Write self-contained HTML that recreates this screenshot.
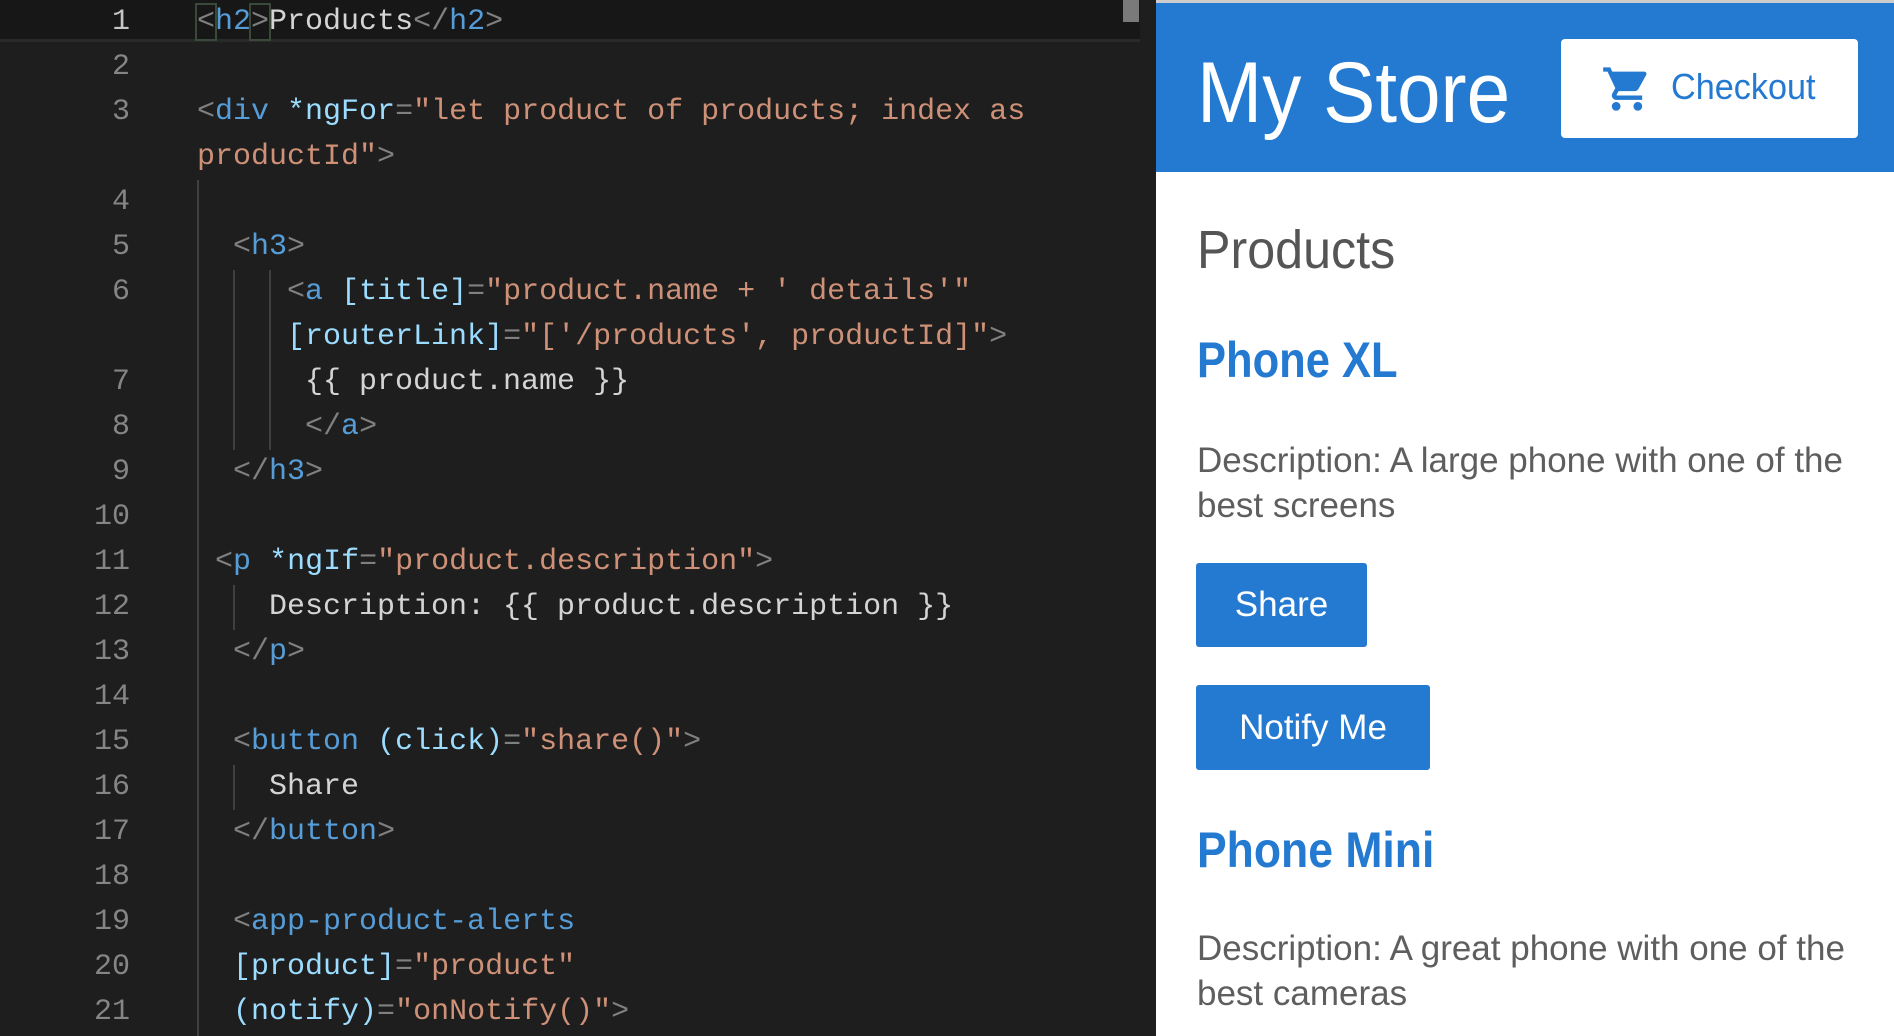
<!DOCTYPE html>
<html><head><meta charset="utf-8"><style>
*{margin:0;padding:0;box-sizing:border-box}
html,body{width:1894px;height:1036px;overflow:hidden;background:#1e1e1e}
#ed{position:absolute;left:0;top:0;width:1156px;height:1036px;background:#1e1e1e;font-family:"Liberation Mono",monospace;font-size:30px}
.hl{position:absolute;left:0;top:0;width:1140px;height:42px;background:#171717;border-bottom:3px solid #2a2a2a}
.ln{position:absolute;left:0;width:130px;text-align:right;color:#858585;line-height:45px;height:45px}
.cd{position:absolute;left:197px;line-height:45px;height:45px;white-space:pre;color:#d4d4d4}
.g{color:#808080}.t{color:#569cd6}.a{color:#9cdcfe}.s{color:#ce9178}
.ig{position:absolute;width:2px;background:#404040}
#rp{position:absolute;left:1156px;top:0;width:738px;height:1036px;background:#fff;font-family:"Liberation Sans",sans-serif}
#hd{position:absolute;left:0;top:0;width:738px;height:172px;background:#2479d0;border-top:3px solid #ccc}
.btn{position:absolute;background:#2479d0;color:#fff;font-size:35px;border-radius:3px;display:flex;align-items:center;justify-content:center}
.desc{position:absolute;left:41px;color:#5e5e5e;font-size:35px;line-height:45px;width:690px}
.h3{position:absolute;left:41px;color:#2479d0;font-size:50px;font-weight:bold;transform-origin:left center;white-space:nowrap}
</style></head><body>
<div id="ed">
<div class="hl"></div>
<div style="position:absolute;left:1123px;top:0;width:16px;height:22px;background:#7a7a7a"></div>
<div class="ig" style="left:197px;top:180px;height:856px"></div>
<div class="ig" style="left:233px;top:270px;height:180px"></div>
<div class="ig" style="left:269px;top:270px;height:180px"></div>
<div class="ig" style="left:233px;top:585px;height:45px"></div>
<div class="ig" style="left:233px;top:765px;height:45px"></div>

<div class="ln" style="top:0;color:#c6c6c6">1</div><div class="cd" style="top:0"><span class="g" style="outline:2px solid #3a4a3a">&lt;</span><span class="t">h2</span><span class="g" style="outline:2px solid #3a4a3a">&gt;</span>Products<span class="g">&lt;/</span><span class="t">h2</span><span class="g">&gt;</span></div>
<div class="ln" style="top:45px">2</div>
<div class="ln" style="top:90px">3</div><div class="cd" style="top:90px"><span class="g">&lt;</span><span class="t">div</span> <span class="a">*ngFor</span><span class="g">=</span><span class="s">"let product of products; index as</span></div>
<div class="cd" style="top:135px"><span class="s">productId"</span><span class="g">&gt;</span></div>
<div class="ln" style="top:180px">4</div>
<div class="ln" style="top:225px">5</div><div class="cd" style="top:225px">  <span class="g">&lt;</span><span class="t">h3</span><span class="g">&gt;</span></div>
<div class="ln" style="top:270px">6</div><div class="cd" style="top:270px">     <span class="g">&lt;</span><span class="t">a</span> <span class="a">[title]</span><span class="g">=</span><span class="s">"product.name + ' details'"</span></div>
<div class="cd" style="top:315px">     <span class="a">[routerLink]</span><span class="g">=</span><span class="s">"['/products', productId]"</span><span class="g">&gt;</span></div>
<div class="ln" style="top:360px">7</div><div class="cd" style="top:360px">      {{ product.name }}</div>
<div class="ln" style="top:405px">8</div><div class="cd" style="top:405px">      <span class="g">&lt;/</span><span class="t">a</span><span class="g">&gt;</span></div>
<div class="ln" style="top:450px">9</div><div class="cd" style="top:450px">  <span class="g">&lt;/</span><span class="t">h3</span><span class="g">&gt;</span></div>
<div class="ln" style="top:495px">10</div>
<div class="ln" style="top:540px">11</div><div class="cd" style="top:540px"> <span class="g">&lt;</span><span class="t">p</span> <span class="a">*ngIf</span><span class="g">=</span><span class="s">"product.description"</span><span class="g">&gt;</span></div>
<div class="ln" style="top:585px">12</div><div class="cd" style="top:585px">    Description: {{ product.description }}</div>
<div class="ln" style="top:630px">13</div><div class="cd" style="top:630px">  <span class="g">&lt;/</span><span class="t">p</span><span class="g">&gt;</span></div>
<div class="ln" style="top:675px">14</div>
<div class="ln" style="top:720px">15</div><div class="cd" style="top:720px">  <span class="g">&lt;</span><span class="t">button</span> <span class="a">(click)</span><span class="g">=</span><span class="s">"share()"</span><span class="g">&gt;</span></div>
<div class="ln" style="top:765px">16</div><div class="cd" style="top:765px">    Share</div>
<div class="ln" style="top:810px">17</div><div class="cd" style="top:810px">  <span class="g">&lt;/</span><span class="t">button</span><span class="g">&gt;</span></div>
<div class="ln" style="top:855px">18</div>
<div class="ln" style="top:900px">19</div><div class="cd" style="top:900px">  <span class="g">&lt;</span><span class="t">app-product-alerts</span></div>
<div class="ln" style="top:945px">20</div><div class="cd" style="top:945px">  <span class="a">[product]</span><span class="g">=</span><span class="s">"product"</span></div>
<div class="ln" style="top:990px">21</div><div class="cd" style="top:990px">  <span class="a">(notify)</span><span class="g">=</span><span class="s">"onNotify()"</span><span class="g">&gt;</span></div>
</div>

<div id="rp">
<div id="hd">
<div style="position:absolute;left:41px;top:40px;color:#fff;font-size:86px;font-weight:300;line-height:100px;white-space:nowrap;transform:scaleX(0.91);transform-origin:left center">My Store</div>
<div style="position:absolute;left:405px;top:36px;width:297px;height:99px;background:#fff;border-radius:4px">
<svg style="position:absolute;left:40px;top:24px" width="52" height="52" viewBox="0 0 24 24"><path fill="#2479d0" d="M7 18c-1.1 0-2 .9-2 2s.9 2 2 2 2-.9 2-2-.9-2-2-2zM1 2v2h2l3.6 7.59-1.35 2.45c-.16.28-.25.61-.25.96 0 1.1.9 2 2 2h12v-2H7.42c-.14 0-.25-.11-.25-.25l.03-.12.9-1.63h7.45c.75 0 1.41-.41 1.75-1.03l3.58-6.49A1 1 0 0 0 20 4H5.21l-.94-2H1zm16 16c-1.1 0-2 .9-2 2s.9 2 2 2 2-.9 2-2-.9-2-2-2z"/></svg>
<div style="position:absolute;left:110px;top:25px;color:#2479d0;font-size:36px;line-height:46px;white-space:nowrap;transform:scaleX(0.95);transform-origin:left center">Checkout</div>
</div>
</div>
<div style="position:absolute;left:41px;top:218px;color:#555;font-size:54px;font-weight:300;line-height:64px;white-space:nowrap;transform:scaleX(0.93);transform-origin:left center">Products</div>
<div class="h3" style="top:330px;line-height:60px;transform:scaleX(0.87)">Phone XL</div>
<div class="desc" style="top:438px">Description: A large phone with one of the best screens</div>
<div class="btn" style="left:40px;top:563px;width:171px;height:84px">Share</div>
<div class="btn" style="left:40px;top:685px;width:234px;height:85px">Notify Me</div>
<div class="h3" style="top:820px;line-height:60px;transform:scaleX(0.89)">Phone Mini</div>
<div class="desc" style="top:926px">Description: A great phone with one of the best cameras</div>
</div>
</body></html>
